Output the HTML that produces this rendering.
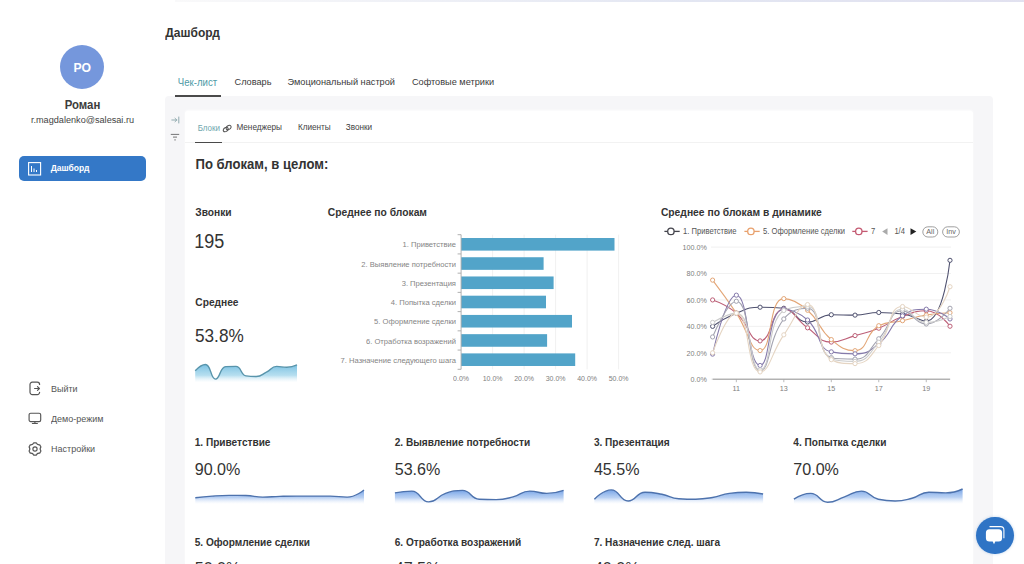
<!DOCTYPE html><html><head><meta charset="utf-8"><style>
html,body{margin:0;padding:0;width:1024px;height:564px;overflow:hidden;background:#fff;position:relative}
.t{position:absolute;white-space:nowrap;font-family:"Liberation Sans", sans-serif}
</style></head><body>
<div style="position:absolute;left:175px;top:0px;width:849px;height:2px;background:linear-gradient(90deg, rgba(235,235,238,0.3), rgba(222,226,240,0.85) 60%, rgba(222,222,238,0.9));"></div>
<div style="position:absolute;left:165px;top:95.5px;width:828px;height:468.5px;background:#f6f6f8;border-radius:4px 4px 0 0;"></div>
<div style="position:absolute;left:185px;top:110.5px;width:788px;height:453.5px;background:#ffffff;border-radius:3px 3px 0 0;box-shadow:0 -1px 2px rgba(255,255,255,0.8);"></div>
<div style="position:absolute;left:60px;top:45px;width:44px;height:44px;border-radius:50%;background:#7597dc;"></div>
<div class="t" style="left:-117.70px;width:400px;text-align:center;top:62.07px;font-size:12.2px;line-height:12.2px;font-weight:700;color:#ffffff;transform:scaleY(1.08);transform-origin:50% 10.33px;">РО</div>
<div class="t" style="left:-117.50px;width:400px;text-align:center;top:99.55px;font-size:11.4px;line-height:11.4px;font-weight:700;color:#3d3d3d;transform:scaleY(1.08);transform-origin:50% 9.65px;">Роман</div>
<div class="t" style="left:-117.50px;width:400px;text-align:center;top:116.05px;font-size:9.15px;line-height:9.15px;font-weight:400;color:#444444;transform:scaleY(1.08);transform-origin:50% 7.75px;">r.magdalenko@salesai.ru</div>
<div style="position:absolute;left:19px;top:156px;width:127px;height:25px;border-radius:5px;background:#3478c7;"></div>
<svg style="position:absolute;left:28px;top:161.5px" width="14" height="14" viewBox="0 0 14 14"><rect x="0.6" y="0.6" width="12" height="12.4" fill="none" stroke="#fff" stroke-width="1.1"/><path d="M3.5 4v6M6 6.5v3.5M8.5 8v2" stroke="#fff" stroke-width="1"/></svg>
<div class="t" style="left:50.70px;top:164.30px;font-size:8.5px;line-height:8.5px;font-weight:700;color:#ffffff;transform:scaleY(1.08);transform-origin:0 7.20px;">Дашборд</div>
<div class="t" style="left:51.00px;top:384.68px;font-size:9px;line-height:9px;font-weight:400;color:#555555;transform:scaleY(1.08);transform-origin:0 7.62px;">Выйти</div>
<div class="t" style="left:51.00px;top:415.08px;font-size:9px;line-height:9px;font-weight:400;color:#555555;transform:scaleY(1.08);transform-origin:0 7.62px;">Демо-режим</div>
<div class="t" style="left:51.00px;top:444.88px;font-size:9px;line-height:9px;font-weight:400;color:#555555;transform:scaleY(1.08);transform-origin:0 7.62px;">Настройки</div>
<svg style="position:absolute;left:28px;top:381px" width="14" height="15" viewBox="0 0 14 15" fill="none" stroke="#555" stroke-width="1.2" stroke-linecap="round" stroke-linejoin="round"><path d="M11.6 3.5A2.3 2.3 0 0 0 9.3 1.2H4.3A2.3 2.3 0 0 0 2 3.5V11.3A2.3 2.3 0 0 0 4.3 13.6H9.3A2.3 2.3 0 0 0 11.6 11.3"/><path d="M6.6 7.5H11.4M9.5 5.6L11.4 7.5 9.5 9.4"/></svg>
<svg style="position:absolute;left:28px;top:412px" width="14" height="13" viewBox="0 0 14 13" fill="none" stroke="#555" stroke-width="1.15" stroke-linecap="round" stroke-linejoin="round"><rect x="1.1" y="1.2" width="11.6" height="8.4" rx="1.6"/><path d="M6.9 9.7V11.3M4.4 11.5H9.4"/></svg>
<svg style="position:absolute;left:27.7px;top:441.5px" width="14" height="14" viewBox="0 0 14 14" fill="none" stroke="#555" stroke-width="1.15" stroke-linejoin="round"><path d="M5.80 0.82L8.20 0.82Q9.15 3.28 11.75 2.87L12.96 4.95Q11.30 7.00 12.96 9.05L11.75 11.13Q9.15 10.72 8.20 13.18L5.80 13.18Q4.85 10.72 2.25 11.13L1.04 9.05Q2.70 7.00 1.04 4.95L2.25 2.87Q4.85 3.28 5.80 0.82Z"/><circle cx="7" cy="7" r="2.1"/></svg>
<div class="t" style="left:165.30px;top:27.44px;font-size:12px;line-height:12px;font-weight:700;color:#333333;transform:scaleY(1.08);transform-origin:0 10.16px;">Дашборд</div>
<div class="t" style="left:177.80px;top:77.67px;font-size:9.6px;line-height:9.6px;font-weight:400;color:#4e9aa6;transform:scaleY(1.08);transform-origin:0 8.13px;">Чек-лист</div>
<div class="t" style="left:234.50px;top:78.01px;font-size:9.2px;line-height:9.2px;font-weight:400;color:#3a3a3a;transform:scaleY(1.08);transform-origin:0 7.79px;">Словарь</div>
<div class="t" style="left:287.50px;top:78.01px;font-size:9.2px;line-height:9.2px;font-weight:400;color:#3a3a3a;transform:scaleY(1.08);transform-origin:0 7.79px;">Эмоциональный настрой</div>
<div class="t" style="left:411.90px;top:78.01px;font-size:9.2px;line-height:9.2px;font-weight:400;color:#3a3a3a;transform:scaleY(1.08);transform-origin:0 7.79px;">Софтовые метрики</div>
<div style="position:absolute;left:175px;top:95.3px;width:46px;height:1.7px;background:#4a4a4a;"></div>
<svg style="position:absolute;left:170.5px;top:115.5px" width="9" height="8" viewBox="0 0 9 8" fill="none" stroke="#86a3a7" stroke-width="0.9" stroke-linecap="round"><path d="M0.8 4h5M4 2.3L5.8 4 4 5.7M7.8 1v6"/></svg>
<svg style="position:absolute;left:170px;top:133px" width="10" height="8" viewBox="0 0 10 8" fill="none" stroke="#666" stroke-width="0.9"><path d="M0.8 1.4h8.4M3 4.1h4M4.3 6.9h1.5"/></svg>
<div class="t" style="left:197.70px;top:124.63px;font-size:8.0px;line-height:8.0px;font-weight:400;color:#6fa7ae;transform:scaleY(1.08);transform-origin:0 6.77px;">Блоки</div>
<svg style="position:absolute;left:222.3px;top:124px" width="11" height="9" viewBox="0 0 11 9" fill="none" stroke="#555" stroke-width="1.05"><ellipse cx="3.7" cy="5.6" rx="2.7" ry="1.9" transform="rotate(-35 3.7 5.6)"/><ellipse cx="6.6" cy="3.6" rx="2.7" ry="1.9" transform="rotate(-35 6.6 3.6)"/></svg>
<div class="t" style="left:236.40px;top:124.46px;font-size:8.2px;line-height:8.2px;font-weight:400;color:#444444;transform:scaleY(1.08);transform-origin:0 6.94px;">Менеджеры</div>
<div class="t" style="left:297.90px;top:124.46px;font-size:8.2px;line-height:8.2px;font-weight:400;color:#444444;transform:scaleY(1.08);transform-origin:0 6.94px;">Клиенты</div>
<div class="t" style="left:345.70px;top:124.46px;font-size:8.2px;line-height:8.2px;font-weight:400;color:#444444;transform:scaleY(1.08);transform-origin:0 6.94px;">Звонки</div>
<div style="position:absolute;left:185px;top:141.5px;width:788px;height:1px;background:#f2f2f2;"></div>
<div style="position:absolute;left:195px;top:141.7px;width:27px;height:1.6px;background:#4a4a4a;"></div>
<div class="t" style="left:195.50px;top:157.91px;font-size:13.1px;line-height:13.1px;font-weight:700;color:#333333;transform:scaleY(1.08);transform-origin:0 11.09px;">По блокам, в целом:</div>
<div class="t" style="left:195.30px;top:207.67px;font-size:10.2px;line-height:10.2px;font-weight:700;color:#333333;transform:scaleY(1.08);transform-origin:0 8.63px;">Звонки</div>
<div class="t" style="left:194.30px;top:233.16px;font-size:18px;line-height:18px;font-weight:400;color:#333333;transform:scaleY(1.08);transform-origin:0 15.24px;">195</div>
<div class="t" style="left:195.30px;top:297.77px;font-size:10.2px;line-height:10.2px;font-weight:700;color:#333333;transform:scaleY(1.08);transform-origin:0 8.63px;">Среднее</div>
<div class="t" style="left:195.00px;top:328.04px;font-size:17.2px;line-height:17.2px;font-weight:400;color:#333333;transform:scaleY(1.08);transform-origin:0 14.56px;">53.8%</div>
<div class="t" style="left:327.80px;top:208.08px;font-size:10.3px;line-height:10.3px;font-weight:700;color:#333333;transform:scaleY(1.08);transform-origin:0 8.72px;">Среднее по блокам</div>
<div class="t" style="right:568.00px;top:241.48px;font-size:7.6px;line-height:7.6px;font-weight:400;color:#858585;transform:scaleY(1.05);transform-origin:100% 6.43px;">1. Приветствие</div>
<div class="t" style="right:568.00px;top:260.71px;font-size:7.6px;line-height:7.6px;font-weight:400;color:#858585;transform:scaleY(1.05);transform-origin:100% 6.43px;">2. Выявление потребности</div>
<div class="t" style="right:568.00px;top:279.94px;font-size:7.6px;line-height:7.6px;font-weight:400;color:#858585;transform:scaleY(1.05);transform-origin:100% 6.43px;">3. Презентация</div>
<div class="t" style="right:568.00px;top:299.17px;font-size:7.6px;line-height:7.6px;font-weight:400;color:#858585;transform:scaleY(1.05);transform-origin:100% 6.43px;">4. Попытка сделки</div>
<div class="t" style="right:568.00px;top:318.40px;font-size:7.6px;line-height:7.6px;font-weight:400;color:#858585;transform:scaleY(1.05);transform-origin:100% 6.43px;">5. Оформление сделки</div>
<div class="t" style="right:568.00px;top:337.62px;font-size:7.6px;line-height:7.6px;font-weight:400;color:#858585;transform:scaleY(1.05);transform-origin:100% 6.43px;">6. Отработка возражений</div>
<div class="t" style="right:568.00px;top:356.85px;font-size:7.6px;line-height:7.6px;font-weight:400;color:#858585;transform:scaleY(1.05);transform-origin:100% 6.43px;">7. Назначение следующего шага</div>
<div class="t" style="left:261.10px;width:400px;text-align:center;top:374.97px;font-size:7px;line-height:7px;font-weight:400;color:#808080;transform:scaleY(1.05);transform-origin:50% 5.93px;">0.0%</div>
<div class="t" style="left:292.60px;width:400px;text-align:center;top:374.97px;font-size:7px;line-height:7px;font-weight:400;color:#808080;transform:scaleY(1.05);transform-origin:50% 5.93px;">10.0%</div>
<div class="t" style="left:324.10px;width:400px;text-align:center;top:374.97px;font-size:7px;line-height:7px;font-weight:400;color:#808080;transform:scaleY(1.05);transform-origin:50% 5.93px;">20.0%</div>
<div class="t" style="left:355.60px;width:400px;text-align:center;top:374.97px;font-size:7px;line-height:7px;font-weight:400;color:#808080;transform:scaleY(1.05);transform-origin:50% 5.93px;">30.0%</div>
<div class="t" style="left:387.10px;width:400px;text-align:center;top:374.97px;font-size:7px;line-height:7px;font-weight:400;color:#808080;transform:scaleY(1.05);transform-origin:50% 5.93px;">40.0%</div>
<div class="t" style="left:418.60px;width:400px;text-align:center;top:374.97px;font-size:7px;line-height:7px;font-weight:400;color:#808080;transform:scaleY(1.05);transform-origin:50% 5.93px;">50.0%</div>
<div class="t" style="left:660.90px;top:208.08px;font-size:10.3px;line-height:10.3px;font-weight:700;color:#333333;transform:scaleY(1.08);transform-origin:0 8.72px;">Среднее по блокам в динамике</div>
<div class="t" style="right:317.00px;top:376.01px;font-size:7.2px;line-height:7.2px;font-weight:400;color:#808080;transform:scaleY(1.05);transform-origin:100% 6.09px;">0.0%</div>
<div class="t" style="right:317.00px;top:349.59px;font-size:7.2px;line-height:7.2px;font-weight:400;color:#808080;transform:scaleY(1.05);transform-origin:100% 6.09px;">20.0%</div>
<div class="t" style="right:317.00px;top:323.17px;font-size:7.2px;line-height:7.2px;font-weight:400;color:#808080;transform:scaleY(1.05);transform-origin:100% 6.09px;">40.0%</div>
<div class="t" style="right:317.00px;top:296.75px;font-size:7.2px;line-height:7.2px;font-weight:400;color:#808080;transform:scaleY(1.05);transform-origin:100% 6.09px;">60.0%</div>
<div class="t" style="right:317.00px;top:270.33px;font-size:7.2px;line-height:7.2px;font-weight:400;color:#808080;transform:scaleY(1.05);transform-origin:100% 6.09px;">80.0%</div>
<div class="t" style="right:317.00px;top:243.91px;font-size:7.2px;line-height:7.2px;font-weight:400;color:#808080;transform:scaleY(1.05);transform-origin:100% 6.09px;">100.0%</div>
<div class="t" style="left:536.34px;width:400px;text-align:center;top:384.51px;font-size:7.2px;line-height:7.2px;font-weight:400;color:#808080;transform:scaleY(1.05);transform-origin:50% 6.09px;">11</div>
<div class="t" style="left:583.82px;width:400px;text-align:center;top:384.51px;font-size:7.2px;line-height:7.2px;font-weight:400;color:#808080;transform:scaleY(1.05);transform-origin:50% 6.09px;">13</div>
<div class="t" style="left:631.30px;width:400px;text-align:center;top:384.51px;font-size:7.2px;line-height:7.2px;font-weight:400;color:#808080;transform:scaleY(1.05);transform-origin:50% 6.09px;">15</div>
<div class="t" style="left:678.78px;width:400px;text-align:center;top:384.51px;font-size:7.2px;line-height:7.2px;font-weight:400;color:#808080;transform:scaleY(1.05);transform-origin:50% 6.09px;">17</div>
<div class="t" style="left:726.26px;width:400px;text-align:center;top:384.51px;font-size:7.2px;line-height:7.2px;font-weight:400;color:#808080;transform:scaleY(1.05);transform-origin:50% 6.09px;">19</div>
<div class="t" style="left:683.10px;top:228.47px;font-size:7.6px;line-height:7.6px;font-weight:400;color:#555555;transform:scaleY(1.08);transform-origin:0 6.43px;">1. Приветствие</div>
<div class="t" style="left:763.10px;top:228.47px;font-size:7.6px;line-height:7.6px;font-weight:400;color:#555555;transform:scaleY(1.08);transform-origin:0 6.43px;">5. Оформление сделки</div>
<div class="t" style="left:871.00px;top:228.47px;font-size:7.6px;line-height:7.6px;font-weight:400;color:#555555;transform:scaleY(1.08);transform-origin:0 6.43px;">7</div>
<div class="t" style="left:894.40px;top:228.47px;font-size:7.6px;line-height:7.6px;font-weight:400;color:#555555;transform:scaleY(1.08);transform-origin:0 6.43px;">1/4</div>
<div class="t" style="left:730.30px;width:400px;text-align:center;top:228.31px;font-size:7.2px;line-height:7.2px;font-weight:400;color:#666666;transform:scaleY(1.08);transform-origin:50% 6.09px;">All</div>
<div class="t" style="left:751.00px;width:400px;text-align:center;top:228.31px;font-size:7.2px;line-height:7.2px;font-weight:400;color:#666666;transform:scaleY(1.08);transform-origin:50% 6.09px;">Inv</div>
<div class="t" style="left:194.70px;top:437.65px;font-size:10.1px;line-height:10.1px;font-weight:700;color:#333333;transform:scaleY(1.08);transform-origin:0 8.55px;">1. Приветствие</div>
<div class="t" style="left:194.70px;top:460.87px;font-size:16.1px;line-height:16.1px;font-weight:400;color:#333333;transform:scaleY(1.08);transform-origin:0 13.63px;">90.0%</div>
<div class="t" style="left:394.70px;top:437.65px;font-size:10.1px;line-height:10.1px;font-weight:700;color:#333333;transform:scaleY(1.08);transform-origin:0 8.55px;">2. Выявление потребности</div>
<div class="t" style="left:394.70px;top:460.87px;font-size:16.1px;line-height:16.1px;font-weight:400;color:#333333;transform:scaleY(1.08);transform-origin:0 13.63px;">53.6%</div>
<div class="t" style="left:593.90px;top:437.65px;font-size:10.1px;line-height:10.1px;font-weight:700;color:#333333;transform:scaleY(1.08);transform-origin:0 8.55px;">3. Презентация</div>
<div class="t" style="left:593.90px;top:460.87px;font-size:16.1px;line-height:16.1px;font-weight:400;color:#333333;transform:scaleY(1.08);transform-origin:0 13.63px;">45.5%</div>
<div class="t" style="left:793.30px;top:437.65px;font-size:10.1px;line-height:10.1px;font-weight:700;color:#333333;transform:scaleY(1.08);transform-origin:0 8.55px;">4. Попытка сделки</div>
<div class="t" style="left:793.30px;top:460.87px;font-size:16.1px;line-height:16.1px;font-weight:400;color:#333333;transform:scaleY(1.08);transform-origin:0 13.63px;">70.0%</div>
<div class="t" style="left:194.70px;top:537.75px;font-size:10.1px;line-height:10.1px;font-weight:700;color:#333333;transform:scaleY(1.08);transform-origin:0 8.55px;">5. Оформление сделки</div>
<div class="t" style="left:194.70px;top:560.37px;font-size:16.1px;line-height:16.1px;font-weight:400;color:#333333;transform:scaleY(1.08);transform-origin:0 13.63px;">50.0%</div>
<div class="t" style="left:394.70px;top:537.75px;font-size:10.1px;line-height:10.1px;font-weight:700;color:#333333;transform:scaleY(1.08);transform-origin:0 8.55px;">6. Отработка возражений</div>
<div class="t" style="left:394.70px;top:560.37px;font-size:16.1px;line-height:16.1px;font-weight:400;color:#333333;transform:scaleY(1.08);transform-origin:0 13.63px;">47.5%</div>
<div class="t" style="left:593.90px;top:537.75px;font-size:10.1px;line-height:10.1px;font-weight:700;color:#333333;transform:scaleY(1.08);transform-origin:0 8.55px;">7. Назначение след. шага</div>
<div class="t" style="left:593.90px;top:560.37px;font-size:16.1px;line-height:16.1px;font-weight:400;color:#333333;transform:scaleY(1.08);transform-origin:0 13.63px;">40.0%</div>
<svg style="position:absolute;left:0;top:0" width="1024" height="564"><line x1="492.60" y1="234.7" x2="492.60" y2="369.3" stroke="#ececec" stroke-width="0.8"/><line x1="524.10" y1="234.7" x2="524.10" y2="369.3" stroke="#ececec" stroke-width="0.8"/><line x1="555.60" y1="234.7" x2="555.60" y2="369.3" stroke="#ececec" stroke-width="0.8"/><line x1="587.10" y1="234.7" x2="587.10" y2="369.3" stroke="#ececec" stroke-width="0.8"/><line x1="618.60" y1="234.7" x2="618.60" y2="369.3" stroke="#ececec" stroke-width="0.8"/><rect x="461.1" y="238.01" width="153.40" height="12.6" fill="#52a4c9"/><rect x="461.1" y="257.24" width="82.50" height="12.6" fill="#52a4c9"/><rect x="461.1" y="276.47" width="92.50" height="12.6" fill="#52a4c9"/><rect x="461.1" y="295.70" width="84.90" height="12.6" fill="#52a4c9"/><rect x="461.1" y="314.93" width="110.90" height="12.6" fill="#52a4c9"/><rect x="461.1" y="334.16" width="86.00" height="12.6" fill="#52a4c9"/><rect x="461.1" y="353.39" width="114.10" height="12.6" fill="#52a4c9"/><line x1="461.1" y1="234.7" x2="461.1" y2="369.3" stroke="#a8a8a8" stroke-width="0.9"/><line x1="457.6" y1="234.70" x2="461.1" y2="234.70" stroke="#a8a8a8" stroke-width="0.9"/><line x1="457.6" y1="253.93" x2="461.1" y2="253.93" stroke="#a8a8a8" stroke-width="0.9"/><line x1="457.6" y1="273.16" x2="461.1" y2="273.16" stroke="#a8a8a8" stroke-width="0.9"/><line x1="457.6" y1="292.39" x2="461.1" y2="292.39" stroke="#a8a8a8" stroke-width="0.9"/><line x1="457.6" y1="311.61" x2="461.1" y2="311.61" stroke="#a8a8a8" stroke-width="0.9"/><line x1="457.6" y1="330.84" x2="461.1" y2="330.84" stroke="#a8a8a8" stroke-width="0.9"/><line x1="457.6" y1="350.07" x2="461.1" y2="350.07" stroke="#a8a8a8" stroke-width="0.9"/><line x1="457.6" y1="369.30" x2="461.1" y2="369.30" stroke="#a8a8a8" stroke-width="0.9"/><line x1="711" y1="379.20" x2="951" y2="379.20" stroke="#ececec" stroke-width="0.8"/><line x1="711" y1="352.78" x2="951" y2="352.78" stroke="#ececec" stroke-width="0.8"/><line x1="711" y1="326.36" x2="951" y2="326.36" stroke="#ececec" stroke-width="0.8"/><line x1="711" y1="299.94" x2="951" y2="299.94" stroke="#ececec" stroke-width="0.8"/><line x1="711" y1="273.52" x2="951" y2="273.52" stroke="#ececec" stroke-width="0.8"/><line x1="711" y1="247.10" x2="951" y2="247.10" stroke="#ececec" stroke-width="0.8"/><line x1="712.6" y1="379.2" x2="950" y2="379.2" stroke="#8a8a8a" stroke-width="0.9"/><line x1="736.34" y1="379.2" x2="736.34" y2="382.2" stroke="#aaa" stroke-width="0.8"/><line x1="783.82" y1="379.2" x2="783.82" y2="382.2" stroke="#aaa" stroke-width="0.8"/><line x1="831.30" y1="379.2" x2="831.30" y2="382.2" stroke="#aaa" stroke-width="0.8"/><line x1="878.78" y1="379.2" x2="878.78" y2="382.2" stroke="#aaa" stroke-width="0.8"/><line x1="926.26" y1="379.2" x2="926.26" y2="382.2" stroke="#aaa" stroke-width="0.8"/><path d="M712.60,326.36 C712.60,326.36 723.85,318.19 736.34,313.15 C747.59,308.61 748.04,307.21 760.08,307.21 C771.78,307.21 772.80,307.21 783.82,308.26 C796.54,309.48 795.10,322.00 807.56,322.00 C818.84,322.00 819.17,314.74 831.30,314.74 C842.91,314.74 843.21,315.13 855.04,315.13 C866.95,315.13 866.89,312.49 878.78,312.49 C890.63,312.49 890.88,312.49 902.52,314.07 C914.62,315.72 919.73,321.08 926.26,321.08 C943.47,321.08 950.00,260.31 950.00,260.31" fill="none" stroke="#505270" stroke-width="1.1"/><circle cx="712.60" cy="326.36" r="2.1" fill="#fff" stroke="#505270" stroke-width="1.0"/><circle cx="736.34" cy="313.15" r="2.1" fill="#fff" stroke="#505270" stroke-width="1.0"/><circle cx="760.08" cy="307.21" r="2.1" fill="#fff" stroke="#505270" stroke-width="1.0"/><circle cx="783.82" cy="308.26" r="2.1" fill="#fff" stroke="#505270" stroke-width="1.0"/><circle cx="807.56" cy="322.00" r="2.1" fill="#fff" stroke="#505270" stroke-width="1.0"/><circle cx="831.30" cy="314.74" r="2.1" fill="#fff" stroke="#505270" stroke-width="1.0"/><circle cx="855.04" cy="315.13" r="2.1" fill="#fff" stroke="#505270" stroke-width="1.0"/><circle cx="878.78" cy="312.49" r="2.1" fill="#fff" stroke="#505270" stroke-width="1.0"/><circle cx="902.52" cy="314.07" r="2.1" fill="#fff" stroke="#505270" stroke-width="1.0"/><circle cx="926.26" cy="321.08" r="2.1" fill="#fff" stroke="#505270" stroke-width="1.0"/><circle cx="950.00" cy="260.31" r="2.1" fill="#fff" stroke="#505270" stroke-width="1.0"/><path d="M712.60,299.94 C712.60,299.94 726.21,304.41 736.34,313.15 C749.95,324.89 748.69,340.89 760.08,340.89 C772.43,340.89 770.35,309.19 783.82,309.19 C794.09,309.19 795.18,319.24 807.56,327.81 C818.92,335.68 818.73,342.08 831.30,342.08 C842.47,342.08 843.23,339.06 855.04,335.61 C866.97,332.12 867.29,332.85 878.78,328.21 C891.03,323.27 890.16,320.99 902.52,316.45 C913.90,312.27 915.27,310.77 926.26,310.77 C939.01,310.77 950.00,326.23 950.00,326.23" fill="none" stroke="#bd6078" stroke-width="1.1"/><circle cx="712.60" cy="299.94" r="2.1" fill="#fff" stroke="#bd6078" stroke-width="1.0"/><circle cx="736.34" cy="313.15" r="2.1" fill="#fff" stroke="#bd6078" stroke-width="1.0"/><circle cx="760.08" cy="340.89" r="2.1" fill="#fff" stroke="#bd6078" stroke-width="1.0"/><circle cx="783.82" cy="309.19" r="2.1" fill="#fff" stroke="#bd6078" stroke-width="1.0"/><circle cx="807.56" cy="327.81" r="2.1" fill="#fff" stroke="#bd6078" stroke-width="1.0"/><circle cx="831.30" cy="342.08" r="2.1" fill="#fff" stroke="#bd6078" stroke-width="1.0"/><circle cx="855.04" cy="335.61" r="2.1" fill="#fff" stroke="#bd6078" stroke-width="1.0"/><circle cx="878.78" cy="328.21" r="2.1" fill="#fff" stroke="#bd6078" stroke-width="1.0"/><circle cx="902.52" cy="316.45" r="2.1" fill="#fff" stroke="#bd6078" stroke-width="1.0"/><circle cx="926.26" cy="310.77" r="2.1" fill="#fff" stroke="#bd6078" stroke-width="1.0"/><circle cx="950.00" cy="326.23" r="2.1" fill="#fff" stroke="#bd6078" stroke-width="1.0"/><path d="M712.60,280.12 C712.60,280.12 724.97,296.30 736.34,313.15 C748.71,331.50 749.71,350.53 760.08,350.53 C773.45,350.53 767.59,298.62 783.82,298.62 C791.33,298.62 797.78,301.81 807.56,310.24 C821.52,322.28 817.29,327.64 831.30,339.57 C841.03,347.85 844.78,350.67 855.04,350.67 C868.52,350.67 864.85,332.83 878.78,325.70 C888.59,320.68 890.69,323.35 902.52,320.68 C914.43,318.00 914.25,317.00 926.26,315.00 C937.99,313.04 950.00,312.75 950.00,312.75" fill="none" stroke="#e3a677" stroke-width="1.1"/><circle cx="712.60" cy="280.12" r="2.1" fill="#fff" stroke="#e3a677" stroke-width="1.0"/><circle cx="736.34" cy="313.15" r="2.1" fill="#fff" stroke="#e3a677" stroke-width="1.0"/><circle cx="760.08" cy="350.53" r="2.1" fill="#fff" stroke="#e3a677" stroke-width="1.0"/><circle cx="783.82" cy="298.62" r="2.1" fill="#fff" stroke="#e3a677" stroke-width="1.0"/><circle cx="807.56" cy="310.24" r="2.1" fill="#fff" stroke="#e3a677" stroke-width="1.0"/><circle cx="831.30" cy="339.57" r="2.1" fill="#fff" stroke="#e3a677" stroke-width="1.0"/><circle cx="855.04" cy="350.67" r="2.1" fill="#fff" stroke="#e3a677" stroke-width="1.0"/><circle cx="878.78" cy="325.70" r="2.1" fill="#fff" stroke="#e3a677" stroke-width="1.0"/><circle cx="902.52" cy="320.68" r="2.1" fill="#fff" stroke="#e3a677" stroke-width="1.0"/><circle cx="926.26" cy="315.00" r="2.1" fill="#fff" stroke="#e3a677" stroke-width="1.0"/><circle cx="950.00" cy="312.75" r="2.1" fill="#fff" stroke="#e3a677" stroke-width="1.0"/><path d="M712.60,354.10 C712.60,354.10 725.39,295.18 736.34,295.18 C749.13,295.18 747.06,365.46 760.08,365.46 C770.80,365.46 767.19,309.19 783.82,309.19 C790.93,309.19 798.15,311.56 807.56,320.02 C821.89,332.89 816.46,348.55 831.30,351.86 C840.20,353.84 843.64,353.84 855.04,353.84 C867.38,353.84 868.99,351.64 878.78,343.80 C892.73,332.62 888.31,325.63 902.52,315.79 C912.05,309.19 914.63,309.19 926.26,309.19 C938.37,309.19 950.00,318.96 950.00,318.96" fill="none" stroke="#857aab" stroke-width="1.1"/><circle cx="712.60" cy="354.10" r="2.1" fill="#fff" stroke="#857aab" stroke-width="1.0"/><circle cx="736.34" cy="295.18" r="2.1" fill="#fff" stroke="#857aab" stroke-width="1.0"/><circle cx="760.08" cy="365.46" r="2.1" fill="#fff" stroke="#857aab" stroke-width="1.0"/><circle cx="783.82" cy="309.19" r="2.1" fill="#fff" stroke="#857aab" stroke-width="1.0"/><circle cx="807.56" cy="320.02" r="2.1" fill="#fff" stroke="#857aab" stroke-width="1.0"/><circle cx="831.30" cy="351.86" r="2.1" fill="#fff" stroke="#857aab" stroke-width="1.0"/><circle cx="855.04" cy="353.84" r="2.1" fill="#fff" stroke="#857aab" stroke-width="1.0"/><circle cx="878.78" cy="343.80" r="2.1" fill="#fff" stroke="#857aab" stroke-width="1.0"/><circle cx="902.52" cy="315.79" r="2.1" fill="#fff" stroke="#857aab" stroke-width="1.0"/><circle cx="926.26" cy="309.19" r="2.1" fill="#fff" stroke="#857aab" stroke-width="1.0"/><circle cx="950.00" cy="318.96" r="2.1" fill="#fff" stroke="#857aab" stroke-width="1.0"/><path d="M712.60,336.93 C712.60,336.93 727.58,301.26 736.34,301.26 C751.32,301.26 746.71,370.61 760.08,370.61 C770.45,370.61 767.54,340.34 783.82,318.96 C791.28,309.17 799.91,308.26 807.56,308.26 C823.65,308.26 814.74,354.32 831.30,357.67 C838.48,359.12 844.78,359.12 855.04,359.12 C868.52,359.12 867.86,349.90 878.78,338.78 C891.60,325.72 888.88,310.77 902.52,310.77 C912.62,310.77 914.67,323.98 926.26,323.98 C938.41,323.98 950.00,308.26 950.00,308.26" fill="none" stroke="#a3a3b0" stroke-width="1.1"/><circle cx="712.60" cy="336.93" r="2.1" fill="#fff" stroke="#a3a3b0" stroke-width="1.0"/><circle cx="736.34" cy="301.26" r="2.1" fill="#fff" stroke="#a3a3b0" stroke-width="1.0"/><circle cx="760.08" cy="370.61" r="2.1" fill="#fff" stroke="#a3a3b0" stroke-width="1.0"/><circle cx="783.82" cy="318.96" r="2.1" fill="#fff" stroke="#a3a3b0" stroke-width="1.0"/><circle cx="807.56" cy="308.26" r="2.1" fill="#fff" stroke="#a3a3b0" stroke-width="1.0"/><circle cx="831.30" cy="357.67" r="2.1" fill="#fff" stroke="#a3a3b0" stroke-width="1.0"/><circle cx="855.04" cy="359.12" r="2.1" fill="#fff" stroke="#a3a3b0" stroke-width="1.0"/><circle cx="878.78" cy="338.78" r="2.1" fill="#fff" stroke="#a3a3b0" stroke-width="1.0"/><circle cx="902.52" cy="310.77" r="2.1" fill="#fff" stroke="#a3a3b0" stroke-width="1.0"/><circle cx="926.26" cy="323.98" r="2.1" fill="#fff" stroke="#a3a3b0" stroke-width="1.0"/><circle cx="950.00" cy="308.26" r="2.1" fill="#fff" stroke="#a3a3b0" stroke-width="1.0"/><path d="M712.60,322.40 C712.60,322.40 729.39,313.15 736.34,313.15 C753.13,313.15 748.44,369.95 760.08,369.95 C772.18,369.95 766.57,321.05 783.82,310.51 C790.31,306.54 800.54,306.54 807.56,306.54 C824.28,306.54 814.54,352.38 831.30,358.72 C838.28,361.37 844.61,361.37 855.04,361.37 C868.35,361.37 868.61,353.39 878.78,342.21 C892.35,327.30 888.29,309.19 902.52,309.19 C912.03,309.19 913.77,322.40 926.26,322.40 C937.51,322.40 950.00,316.45 950.00,316.45" fill="none" stroke="#cbcbcb" stroke-width="1.1"/><circle cx="712.60" cy="322.40" r="2.1" fill="#fff" stroke="#cbcbcb" stroke-width="1.0"/><circle cx="736.34" cy="313.15" r="2.1" fill="#fff" stroke="#cbcbcb" stroke-width="1.0"/><circle cx="760.08" cy="369.95" r="2.1" fill="#fff" stroke="#cbcbcb" stroke-width="1.0"/><circle cx="783.82" cy="310.51" r="2.1" fill="#fff" stroke="#cbcbcb" stroke-width="1.0"/><circle cx="807.56" cy="306.54" r="2.1" fill="#fff" stroke="#cbcbcb" stroke-width="1.0"/><circle cx="831.30" cy="358.72" r="2.1" fill="#fff" stroke="#cbcbcb" stroke-width="1.0"/><circle cx="855.04" cy="361.37" r="2.1" fill="#fff" stroke="#cbcbcb" stroke-width="1.0"/><circle cx="878.78" cy="342.21" r="2.1" fill="#fff" stroke="#cbcbcb" stroke-width="1.0"/><circle cx="902.52" cy="309.19" r="2.1" fill="#fff" stroke="#cbcbcb" stroke-width="1.0"/><circle cx="926.26" cy="322.40" r="2.1" fill="#fff" stroke="#cbcbcb" stroke-width="1.0"/><circle cx="950.00" cy="316.45" r="2.1" fill="#fff" stroke="#cbcbcb" stroke-width="1.0"/><path d="M712.60,352.78 C712.60,352.78 726.33,313.15 736.34,313.15 C750.07,313.15 746.07,371.93 760.08,371.93 C769.81,371.93 771.14,352.80 783.82,334.81 C794.88,319.12 798.29,304.56 807.56,304.56 C822.03,304.56 814.36,349.77 831.30,359.65 C838.10,363.61 844.44,363.61 855.04,363.61 C868.18,363.61 869.39,356.80 878.78,345.51 C893.13,328.27 887.39,306.54 902.52,306.54 C911.13,306.54 916.70,317.11 926.26,317.11 C940.44,317.11 950.00,286.73 950.00,286.73" fill="none" stroke="#e5d5c3" stroke-width="1.1"/><circle cx="712.60" cy="352.78" r="2.1" fill="#fff" stroke="#e5d5c3" stroke-width="1.0"/><circle cx="736.34" cy="313.15" r="2.1" fill="#fff" stroke="#e5d5c3" stroke-width="1.0"/><circle cx="760.08" cy="371.93" r="2.1" fill="#fff" stroke="#e5d5c3" stroke-width="1.0"/><circle cx="783.82" cy="334.81" r="2.1" fill="#fff" stroke="#e5d5c3" stroke-width="1.0"/><circle cx="807.56" cy="304.56" r="2.1" fill="#fff" stroke="#e5d5c3" stroke-width="1.0"/><circle cx="831.30" cy="359.65" r="2.1" fill="#fff" stroke="#e5d5c3" stroke-width="1.0"/><circle cx="855.04" cy="363.61" r="2.1" fill="#fff" stroke="#e5d5c3" stroke-width="1.0"/><circle cx="878.78" cy="345.51" r="2.1" fill="#fff" stroke="#e5d5c3" stroke-width="1.0"/><circle cx="902.52" cy="306.54" r="2.1" fill="#fff" stroke="#e5d5c3" stroke-width="1.0"/><circle cx="926.26" cy="317.11" r="2.1" fill="#fff" stroke="#e5d5c3" stroke-width="1.0"/><circle cx="950.00" cy="286.73" r="2.1" fill="#fff" stroke="#e5d5c3" stroke-width="1.0"/><line x1="664.4" y1="231.4" x2="679.6999999999999" y2="231.4" stroke="#44444c" stroke-width="1.3"/><circle cx="670.9" cy="231.4" r="3.2" fill="#fff" stroke="#44444c" stroke-width="1.3"/><line x1="744.4" y1="231.4" x2="759.6999999999999" y2="231.4" stroke="#e8a06c" stroke-width="1.3"/><circle cx="750.9" cy="231.4" r="3.2" fill="#fff" stroke="#e8a06c" stroke-width="1.3"/><line x1="852.3" y1="231.4" x2="867.5999999999999" y2="231.4" stroke="#c45a72" stroke-width="1.3"/><circle cx="858.8" cy="231.4" r="3.2" fill="#fff" stroke="#c45a72" stroke-width="1.3"/><path d="M887.5,228.3 L882.2,231.6 L887.5,235 Z" fill="#aaaaaa"/><path d="M910.5,228.3 L916.3,231.6 L910.5,235 Z" fill="#222222"/><rect x="922.8" y="226.8" width="15" height="10.2" rx="5.1" fill="none" stroke="#888" stroke-width="0.8"/><rect x="942.6" y="226.8" width="16.8" height="10.2" rx="5.1" fill="none" stroke="#888" stroke-width="0.8"/><defs><linearGradient id="g0" x1="0" y1="0" x2="0" y2="1"><stop offset="0" stop-color="#72bde0" stop-opacity="0.95"/><stop offset="0.6" stop-color="#9dd3ea" stop-opacity="0.75"/><stop offset="1" stop-color="#ffffff" stop-opacity="0.3"/></linearGradient><linearGradient id="g1" x1="0" y1="0" x2="0" y2="1"><stop offset="0" stop-color="#6f9fe6" stop-opacity="0.95"/><stop offset="0.55" stop-color="#a3c2ef" stop-opacity="0.75"/><stop offset="1" stop-color="#ffffff" stop-opacity="0.3"/></linearGradient></defs><path d="M195.20,370.70 C195.20,370.70 201.30,364.50 205.38,364.50 C211.48,364.50 210.22,379.10 215.56,379.10 C220.40,379.10 219.50,366.92 225.74,366.60 C229.68,366.40 231.62,366.40 235.92,366.40 C241.80,366.40 240.22,375.08 246.10,375.90 C250.40,376.50 251.39,376.50 256.28,376.50 C261.57,376.50 261.52,374.65 266.46,372.20 C271.70,369.60 271.20,366.40 276.64,366.40 C281.38,366.40 281.79,367.30 286.82,367.30 C291.97,367.30 297.00,364.90 297.00,364.90 L297.00,382.5 L195.20,382.5 Z" fill="url(#g0)"/><path d="M195.20,370.70 C195.20,370.70 201.30,364.50 205.38,364.50 C211.48,364.50 210.22,379.10 215.56,379.10 C220.40,379.10 219.50,366.92 225.74,366.60 C229.68,366.40 231.62,366.40 235.92,366.40 C241.80,366.40 240.22,375.08 246.10,375.90 C250.40,376.50 251.39,376.50 256.28,376.50 C261.57,376.50 261.52,374.65 266.46,372.20 C271.70,369.60 271.20,366.40 276.64,366.40 C281.38,366.40 281.79,367.30 286.82,367.30 C291.97,367.30 297.00,364.90 297.00,364.90" fill="none" stroke="#5894ab" stroke-width="1.4"/><path d="M195.30,497.80 C195.30,497.80 203.72,496.70 212.17,496.10 C220.59,495.50 220.60,495.40 229.04,495.40 C237.47,495.40 237.49,495.40 245.91,495.50 C254.36,495.60 254.33,497.10 262.78,497.10 C271.20,497.10 271.21,496.65 279.65,496.40 C288.08,496.15 288.08,496.10 296.52,496.10 C304.95,496.10 304.95,496.10 313.39,496.10 C321.82,496.10 321.83,496.10 330.26,496.10 C338.70,496.10 339.04,497.10 347.13,497.10 C355.91,497.10 364.00,489.90 364.00,489.90 L364.00,504 L195.30,504 Z" fill="url(#g1)"/><path d="M195.30,497.80 C195.30,497.80 203.72,496.70 212.17,496.10 C220.59,495.50 220.60,495.40 229.04,495.40 C237.47,495.40 237.49,495.40 245.91,495.50 C254.36,495.60 254.33,497.10 262.78,497.10 C271.20,497.10 271.21,496.65 279.65,496.40 C288.08,496.15 288.08,496.10 296.52,496.10 C304.95,496.10 304.95,496.10 313.39,496.10 C321.82,496.10 321.83,496.10 330.26,496.10 C338.70,496.10 339.04,497.10 347.13,497.10 C355.91,497.10 364.00,489.90 364.00,489.90" fill="none" stroke="#4d72ad" stroke-width="1.4"/><path d="M394.90,492.90 C394.90,492.90 404.03,491.10 411.77,491.10 C420.90,491.10 419.96,501.90 428.64,501.90 C436.83,501.90 436.66,496.42 445.51,493.40 C453.53,490.67 454.39,490.40 462.38,490.40 C471.26,490.40 470.31,498.75 479.25,499.20 C487.18,499.60 487.74,499.60 496.12,499.60 C504.61,499.60 504.74,498.98 512.99,496.90 C521.61,494.73 521.23,491.10 529.86,491.10 C538.10,491.10 538.33,493.40 546.73,493.40 C555.20,493.40 563.60,490.30 563.60,490.30 L563.60,504 L394.90,504 Z" fill="url(#g1)"/><path d="M394.90,492.90 C394.90,492.90 404.03,491.10 411.77,491.10 C420.90,491.10 419.96,501.90 428.64,501.90 C436.83,501.90 436.66,496.42 445.51,493.40 C453.53,490.67 454.39,490.40 462.38,490.40 C471.26,490.40 470.31,498.75 479.25,499.20 C487.18,499.60 487.74,499.60 496.12,499.60 C504.61,499.60 504.74,498.98 512.99,496.90 C521.61,494.73 521.23,491.10 529.86,491.10 C538.10,491.10 538.33,493.40 546.73,493.40 C555.20,493.40 563.60,490.30 563.60,490.30" fill="none" stroke="#4d72ad" stroke-width="1.4"/><path d="M594.40,499.20 C594.40,499.20 603.03,489.90 611.27,489.90 C619.90,489.90 619.45,501.00 628.14,501.00 C636.32,501.00 636.10,492.20 645.01,492.20 C652.97,492.20 653.55,492.70 661.88,494.30 C670.42,495.95 670.18,498.18 678.75,498.70 C687.05,499.20 687.20,499.20 695.62,499.20 C704.07,499.20 704.15,498.93 712.49,497.50 C721.02,496.03 720.81,494.63 729.36,493.40 C737.68,492.20 737.81,492.20 746.23,492.20 C754.68,492.20 763.10,494.00 763.10,494.00 L763.10,504 L594.40,504 Z" fill="url(#g1)"/><path d="M594.40,499.20 C594.40,499.20 603.03,489.90 611.27,489.90 C619.90,489.90 619.45,501.00 628.14,501.00 C636.32,501.00 636.10,492.20 645.01,492.20 C652.97,492.20 653.55,492.70 661.88,494.30 C670.42,495.95 670.18,498.18 678.75,498.70 C687.05,499.20 687.20,499.20 695.62,499.20 C704.07,499.20 704.15,498.93 712.49,497.50 C721.02,496.03 720.81,494.63 729.36,493.40 C737.68,492.20 737.81,492.20 746.23,492.20 C754.68,492.20 763.10,494.00 763.10,494.00" fill="none" stroke="#4d72ad" stroke-width="1.4"/><path d="M793.90,499.20 C793.90,499.20 802.61,493.40 810.77,493.40 C819.48,493.40 818.90,502.20 827.64,502.20 C835.77,502.20 836.11,499.66 844.51,496.90 C852.98,494.11 853.15,491.10 861.38,491.10 C870.02,491.10 869.40,497.21 878.25,499.20 C886.27,501.00 886.72,501.00 895.12,501.00 C903.59,501.00 903.75,500.35 911.99,498.20 C920.62,495.95 920.18,492.20 928.86,492.20 C937.05,492.20 937.40,492.90 945.73,492.90 C954.27,492.90 962.60,489.00 962.60,489.00 L962.60,504 L793.90,504 Z" fill="url(#g1)"/><path d="M793.90,499.20 C793.90,499.20 802.61,493.40 810.77,493.40 C819.48,493.40 818.90,502.20 827.64,502.20 C835.77,502.20 836.11,499.66 844.51,496.90 C852.98,494.11 853.15,491.10 861.38,491.10 C870.02,491.10 869.40,497.21 878.25,499.20 C886.27,501.00 886.72,501.00 895.12,501.00 C903.59,501.00 903.75,500.35 911.99,498.20 C920.62,495.95 920.18,492.20 928.86,492.20 C937.05,492.20 937.40,492.90 945.73,492.90 C954.27,492.90 962.60,489.00 962.60,489.00" fill="none" stroke="#4d72ad" stroke-width="1.4"/></svg>
<div style="position:absolute;left:976.4px;top:516.6px;width:37.5px;height:37.5px;border-radius:50%;background:#2f74c5;box-shadow:0 0 3px rgba(47,116,197,0.3)"></div>
<svg style="position:absolute;left:984px;top:525px" width="22" height="22" viewBox="0 0 22 22"><path d="M5.5 1.6H16.6A3.3 3.3 0 0 1 19.9 4.9V13.3" fill="none" stroke="#fff" stroke-width="1.1"/><path d="M5.4 4.3H14.6A3.5 3.5 0 0 1 18.1 7.8V13.1A3.5 3.5 0 0 1 14.6 16.6H11.3L10 19.2 8.7 16.6H5.4A3.5 3.5 0 0 1 1.9 13.1V7.8A3.5 3.5 0 0 1 5.4 4.3Z" fill="#fff"/></svg>
</body></html>
